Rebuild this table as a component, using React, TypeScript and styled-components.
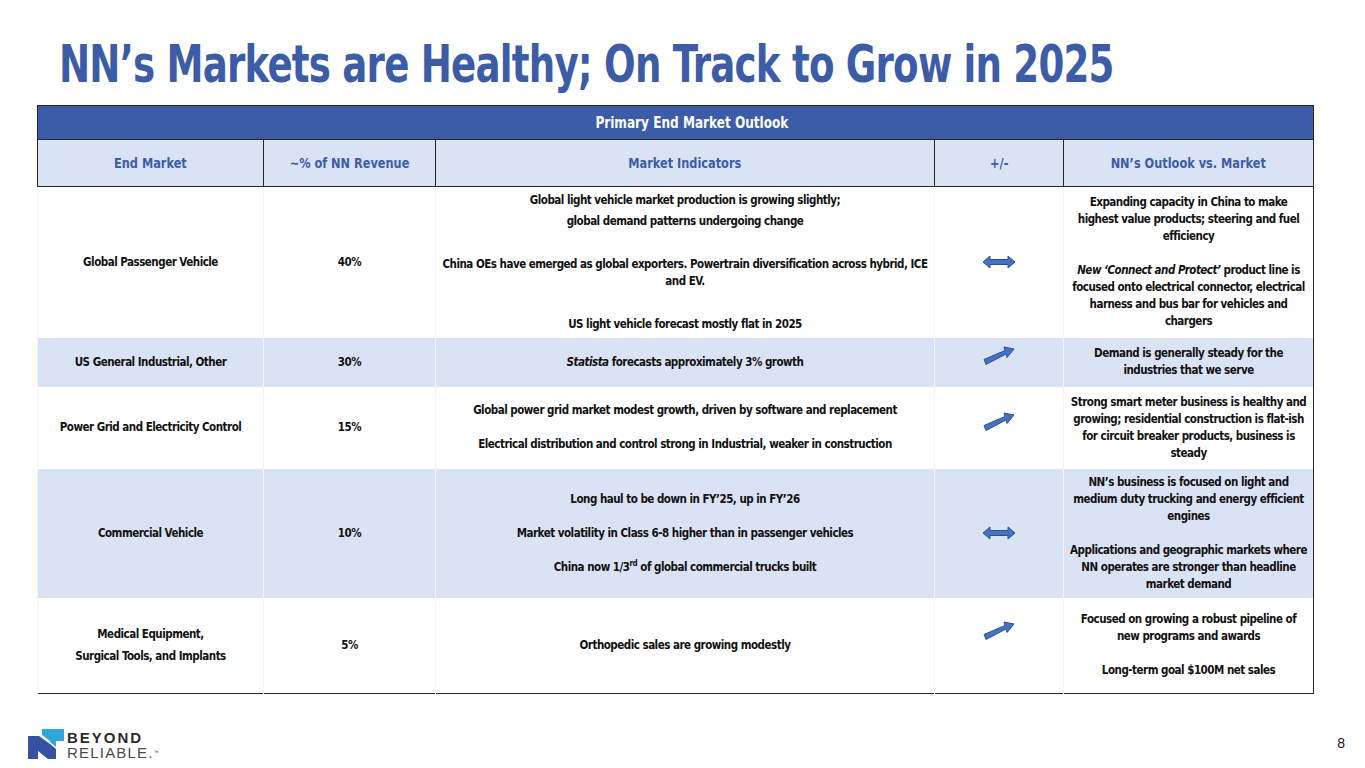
import React from "react";
import styled, { createGlobalStyle } from "styled-components";

const GlobalStyle = createGlobalStyle`
  html, body {
    margin: 0;
    padding: 0;
    background: #ffffff;
  }
`;

const FONT = `"DejaVu Sans Condensed", "DejaVu Sans", sans-serif`;

const Page = styled.div`
  width: 1365px;
  height: 768px;
  position: relative;
  overflow: hidden;
  background: #ffffff;
  font-family: ${FONT};
  display: flex;
  flex-direction: column;
`;

const Title = styled.h1`
  margin: 35px 0 0 59px;
  font-family: ${FONT};
  font-size: 52px;
  line-height: 58px;
  font-weight: 700;
  color: #3d5ca8;
  letter-spacing: -1px;
  white-space: nowrap;
  transform: scaleX(0.795);
  transform-origin: left center;
`;

const Squeeze = styled.span<{ $x: number }>`
  display: inline-block;
  transform: scaleX(${({ $x }) => $x});
`;

const Table = styled.table`
  margin: 12px 0 0 37px;
  width: 1276px;
  border-collapse: collapse;
  table-layout: fixed;
  border: 1.5px solid #262626;
`;

const Banner = styled.th`
  height: 33px;
  padding: 0 0 0 32px;
  background: #3c5ba8;
  color: #ffffff;
  font-size: 16px;
  font-weight: 700;
  text-align: center;
  border: 1.5px solid #262626;
`;

const HeadCell = styled.th`
  height: 46px;
  padding: 0;
  background: #dae3f3;
  color: #3d5ca8;
  font-size: 14px;
  font-weight: 700;
  text-align: center;
  white-space: nowrap;
  border: 1.5px solid #262626;
`;

const Row = styled.tr<{ $shade?: boolean; $h: number }>`
  height: ${({ $h }) => $h}px;
  background: ${({ $shade }) => ($shade ? "#dae3f3" : "#ffffff")};
`;

const Cell = styled.td`
  padding: 0 4px;
  text-align: center;
  vertical-align: middle;
  white-space: nowrap;
  color: #111111;
  font-size: 11.5px;
  letter-spacing: -0.5px;
  font-weight: 700;
  line-height: 17px;
  border-left: 1.5px solid #f4f6fb;
`;

const Line = styled.div<{ $gap?: number }>`
  margin-top: ${({ $gap }) => $gap ?? 0}px;
`;

const Em = styled.i`
  font-style: italic;
`;

const Sup = styled.sup`
  font-size: 8px;
  line-height: 0;
`;

const ArrowBox = styled.div<{ $lift?: number }>`
  display: flex;
  justify-content: center;
  align-items: center;
  margin-bottom: ${({ $lift }) => $lift ?? 0}px;
`;

const Footer = styled.div`
  position: absolute;
  left: 0;
  right: 0;
  bottom: 0;
  height: 48px;
  display: flex;
  align-items: center;
  justify-content: space-between;
  padding: 0 20px 0 28px;
`;

const Logo = styled.div`
  display: flex;
  align-items: center;
  gap: 3px;
`;

const LogoWords = styled.div`
  display: flex;
  flex-direction: column;
  font-family: "Liberation Sans", Arial, sans-serif;
  line-height: 15px;
  margin-top: 1px;
`;

const Beyond = styled.span`
  font-size: 15px;
  font-weight: 700;
  color: #2b2b2b;
  letter-spacing: 2px;
`;

const Reliable = styled.span`
  font-size: 15px;
  font-weight: 400;
  color: #4a4a4a;
  letter-spacing: 1.2px;
  small {
    font-size: 5px;
    letter-spacing: 0;
    vertical-align: top;
  }
`;

const PageNum = styled.span`
  font-family: "Liberation Sans", Arial, sans-serif;
  font-size: 14px;
  color: #111111;
  margin-top: -2px;
`;

const DoubleArrow = () => (
  <svg width="34" height="14" viewBox="0 0 34 14">
    <polygon
      points="1,7 8,1 8,4.5 26,4.5 26,1 33,7 26,13 26,9.5 8,9.5 8,13"
      fill="#4472c4"
      stroke="#2f4f8f"
      strokeWidth="1"
      strokeLinejoin="round"
    />
  </svg>
);

const UpArrow = () => (
  <svg width="34" height="22" viewBox="0 0 34 22">
    <polygon
      points="2,14.5 23,5.5 22,2 32,4 25,12.5 24,9 4,19.5"
      fill="#4472c4"
      stroke="#2f4f8f"
      strokeWidth="1"
      strokeLinejoin="round"
    />
  </svg>
);

const NMark = () => (
  <svg width="36" height="30" viewBox="0 0 36 30">
    <polygon points="14,0 36,0 36,12 28,12 28,8 22,8 22,12 14,6" fill="#2ea7df" />
    <polygon points="22,8 28,8 28,18 22,13" fill="#2ea7df" />
    <polygon points="0,7 11,7 22,15 28,20 28,30 20,30 10,22 10,30 0,30" fill="#3452a4" />
    <polygon points="10,13 14,13 22,19 22,26 10,17" fill="#3452a4" />
  </svg>
);

const App: React.FC = () => {
  return (
    <Page>
      <GlobalStyle />
      <Title>NN’s Markets are Healthy; On Track to Grow in 2025</Title>
      <Table>
        <colgroup>
          <col style={{ width: 226 }} />
          <col style={{ width: 172 }} />
          <col style={{ width: 499 }} />
          <col style={{ width: 129 }} />
          <col style={{ width: 250 }} />
        </colgroup>
        <thead>
          <tr>
            <Banner colSpan={5}>
              <Squeeze $x={0.84}>Primary End Market Outlook</Squeeze>
            </Banner>
          </tr>
          <tr>
            <HeadCell>
              <Squeeze $x={0.9}>End Market</Squeeze>
            </HeadCell>
            <HeadCell>
              <Squeeze $x={0.9}>~% of NN Revenue</Squeeze>
            </HeadCell>
            <HeadCell>
              <Squeeze $x={0.9}>Market Indicators</Squeeze>
            </HeadCell>
            <HeadCell>
              <Squeeze $x={0.9}>+/-</Squeeze>
            </HeadCell>
            <HeadCell>
              <Squeeze $x={0.9}>NN’s Outlook vs. Market</Squeeze>
            </HeadCell>
          </tr>
        </thead>
        <tbody>
          <Row $h={151}>
            <Cell>Global Passenger Vehicle</Cell>
            <Cell>40%</Cell>
            <Cell>
              <Line>Global light vehicle market production is growing slightly;</Line>
              <Line $gap={4}>global demand patterns undergoing change</Line>
              <Line $gap={26}>
                China OEs have emerged as global exporters. Powertrain diversification across hybrid, ICE
                <br />
                and EV.
              </Line>
              <Line $gap={26}>US light vehicle forecast mostly flat in 2025</Line>
            </Cell>
            <Cell>
              <ArrowBox>
                <DoubleArrow />
              </ArrowBox>
            </Cell>
            <Cell>
              <Line>
                Expanding capacity in China to make
                <br />
                highest value products; steering and fuel
                <br />
                efficiency
              </Line>
              <Line $gap={17}>
                <Em>New ‘Connect and Protect’</Em> product line is
                <br />
                focused onto electrical connector, electrical
                <br />
                harness and bus bar for vehicles and
                <br />
                chargers
              </Line>
            </Cell>
          </Row>
          <Row $h={49} $shade>
            <Cell>US General Industrial, Other</Cell>
            <Cell>30%</Cell>
            <Cell>
              <Em>Statista</Em> forecasts approximately 3% growth
            </Cell>
            <Cell>
              <ArrowBox $lift={12}>
                <UpArrow />
              </ArrowBox>
            </Cell>
            <Cell>
              Demand is generally steady for the
              <br />
              industries that we serve
            </Cell>
          </Row>
          <Row $h={82}>
            <Cell>Power Grid and Electricity Control</Cell>
            <Cell>15%</Cell>
            <Cell>
              <Line>Global power grid market modest growth, driven by software and replacement</Line>
              <Line $gap={17}>Electrical distribution and control strong in Industrial, weaker in construction</Line>
            </Cell>
            <Cell>
              <ArrowBox $lift={12}>
                <UpArrow />
              </ArrowBox>
            </Cell>
            <Cell>
              Strong smart meter business is healthy and
              <br />
              growing; residential construction is flat-ish
              <br />
              for circuit breaker products, business is
              <br />
              steady
            </Cell>
          </Row>
          <Row $h={129} $shade>
            <Cell>Commercial Vehicle</Cell>
            <Cell>10%</Cell>
            <Cell>
              <Line>Long haul to be down in FY’25, up in FY’26</Line>
              <Line $gap={17}>Market volatility in Class 6-8 higher than in passenger vehicles</Line>
              <Line $gap={17}>
                China now 1/3<Sup>rd</Sup> of global commercial trucks built
              </Line>
            </Cell>
            <Cell>
              <ArrowBox>
                <DoubleArrow />
              </ArrowBox>
            </Cell>
            <Cell>
              <Line>
                NN’s business is focused on light and
                <br />
                medium duty trucking and energy efficient
                <br />
                engines
              </Line>
              <Line $gap={17}>
                Applications and geographic markets where
                <br />
                NN operates are stronger than headline
                <br />
                market demand
              </Line>
            </Cell>
          </Row>
          <Row $h={96}>
            <Cell>
              <Line>Medical Equipment,</Line>
              <Line $gap={5}>Surgical Tools, and Implants</Line>
            </Cell>
            <Cell>5%</Cell>
            <Cell>Orthopedic sales are growing modestly</Cell>
            <Cell>
              <ArrowBox $lift={28}>
                <UpArrow />
              </ArrowBox>
            </Cell>
            <Cell>
              <Line>
                Focused on growing a robust pipeline of
                <br />
                new programs and awards
              </Line>
              <Line $gap={17}>Long-term goal $100M net sales</Line>
            </Cell>
          </Row>
        </tbody>
      </Table>
      <Footer>
        <Logo>
          <NMark />
          <LogoWords>
            <Beyond>BEYOND</Beyond>
            <Reliable>
              RELIABLE.<small>™</small>
            </Reliable>
          </LogoWords>
        </Logo>
        <PageNum>8</PageNum>
      </Footer>
    </Page>
  );
};

export default App;
